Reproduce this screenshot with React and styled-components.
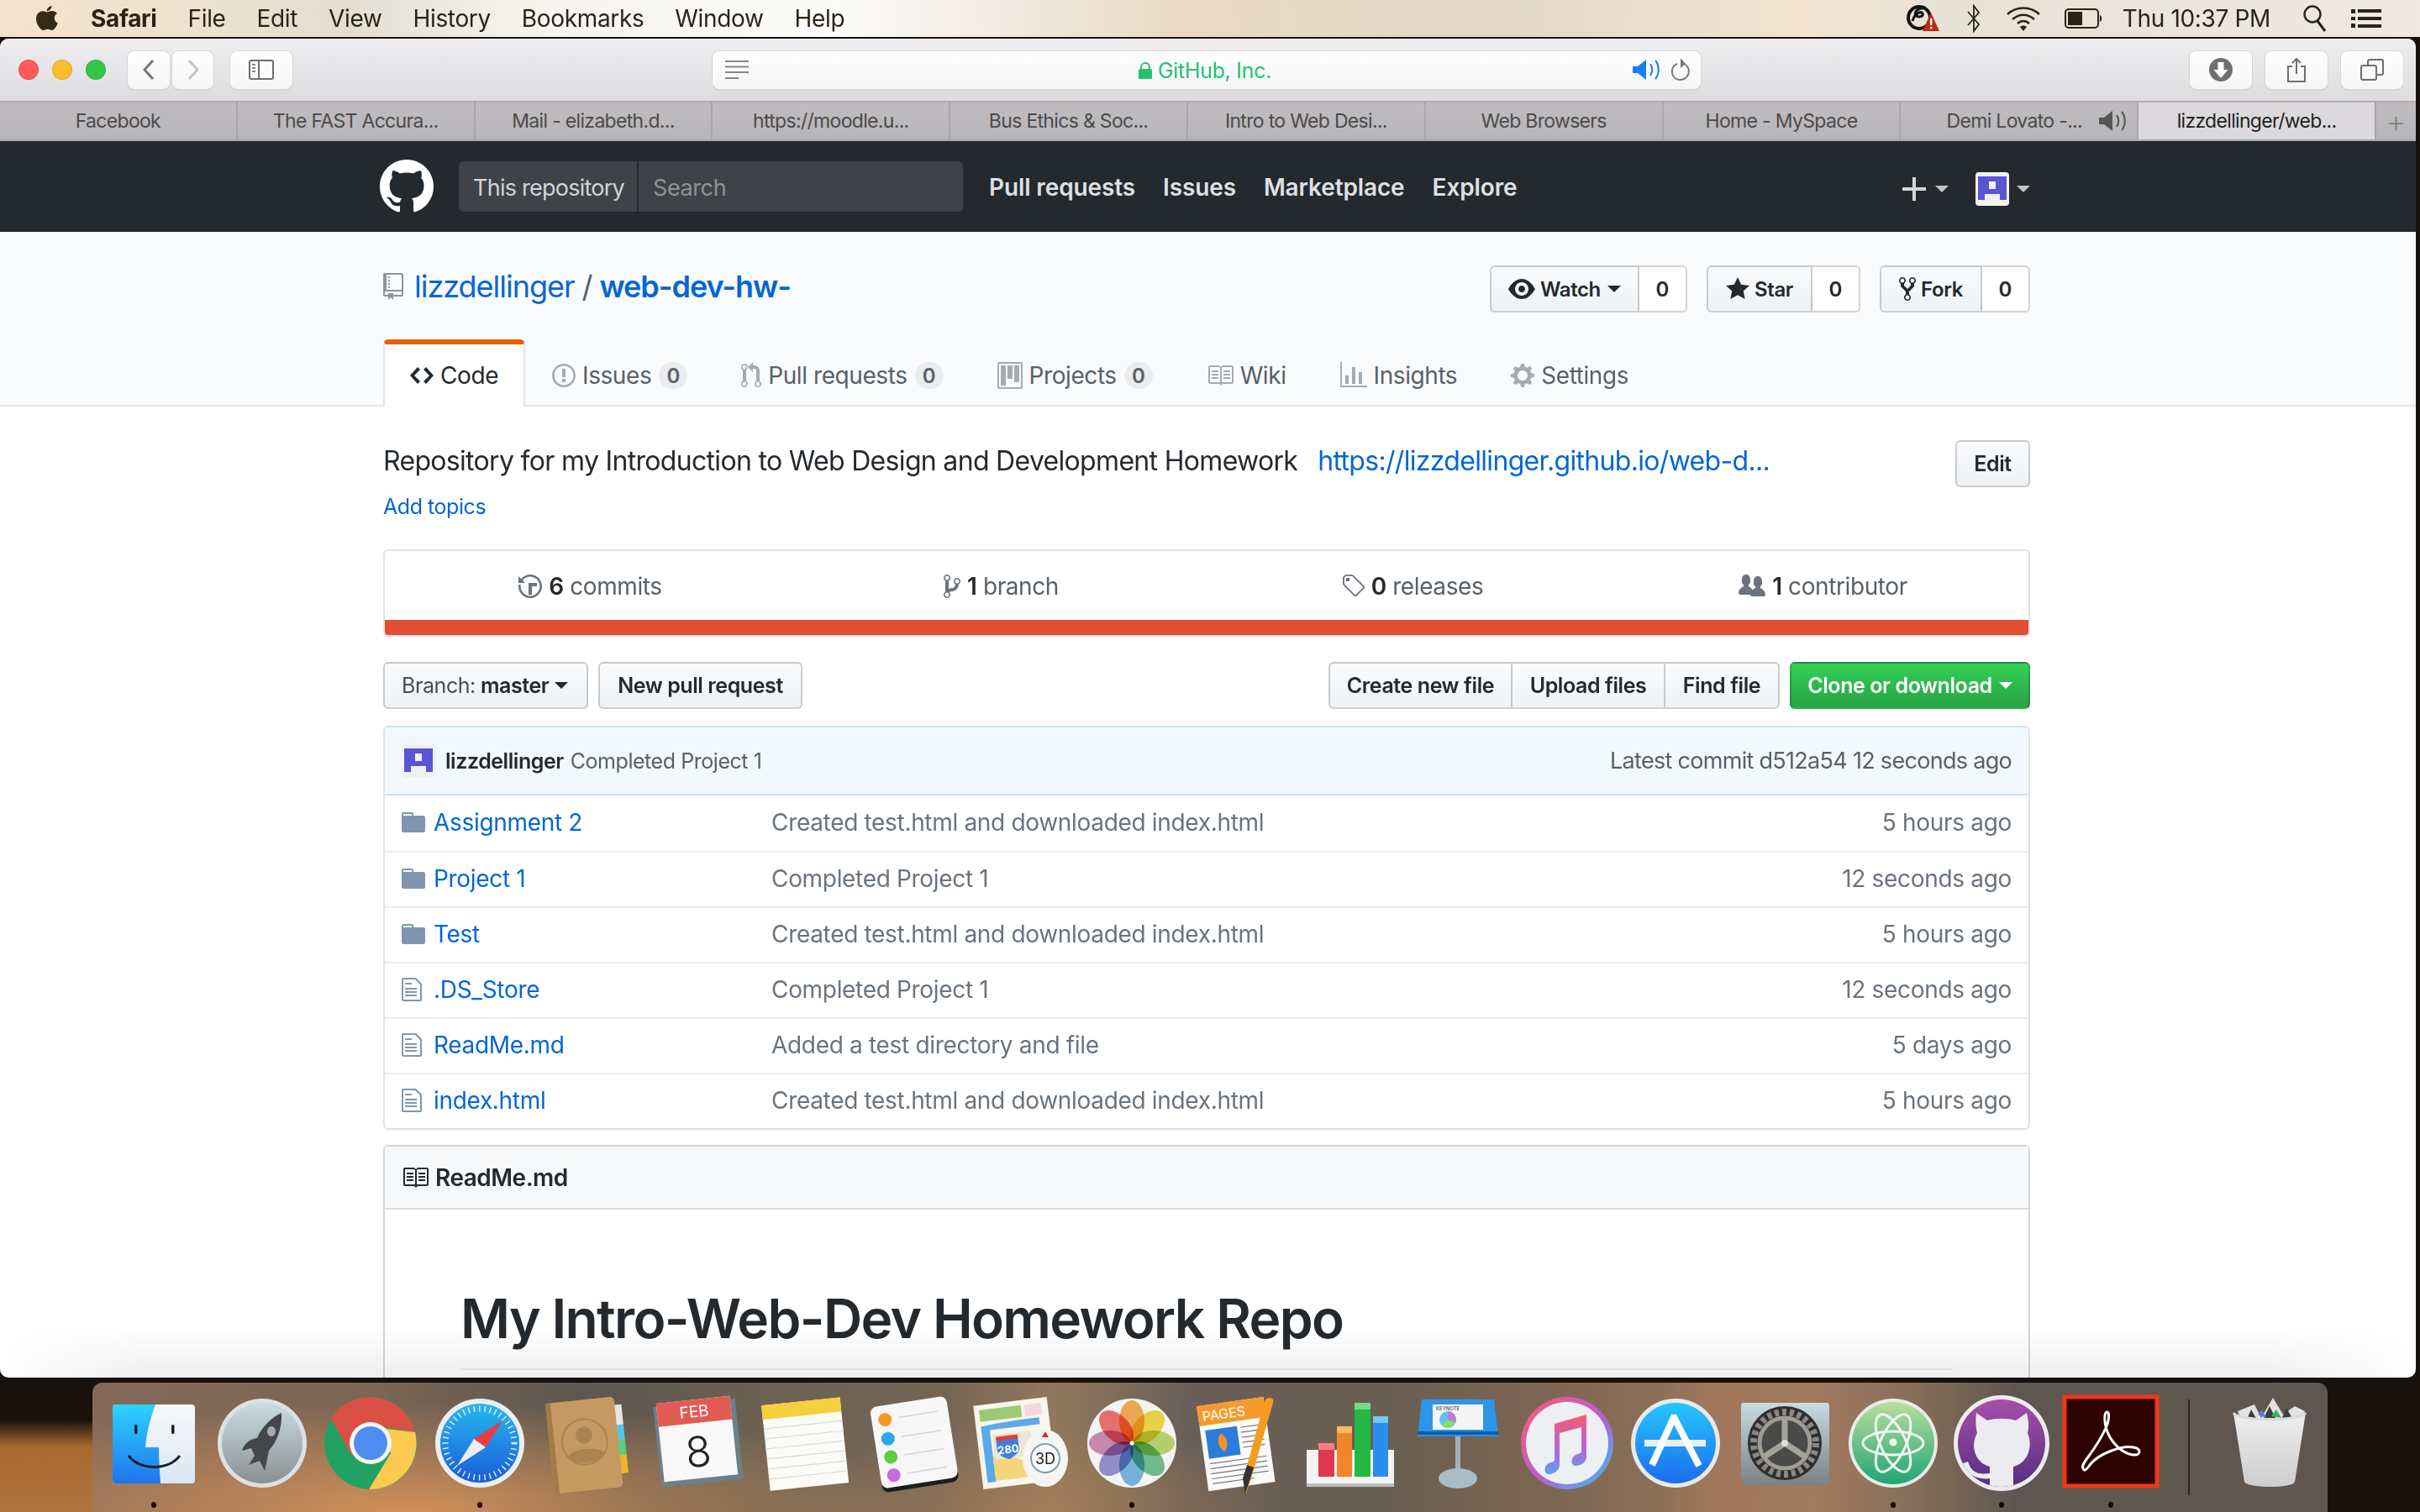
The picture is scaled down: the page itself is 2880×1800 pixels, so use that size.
import React from 'react'
import styled, { createGlobalStyle } from 'styled-components'

const sans = '"Inter", "Liberation Sans", sans-serif'

const Global = createGlobalStyle`
  html, body { margin: 0; padding: 0; }
  body { font-family: ${sans}; width: 2880px; height: 1800px; overflow: hidden; }
  * { box-sizing: border-box; }
`

/* ---------- octicons ---------- */
const oct = {
  mark: [16, 'M8 0C3.58 0 0 3.58 0 8c0 3.54 2.29 6.53 5.47 7.59.4.07.55-.17.55-.38 0-.19-.01-.82-.01-1.49-2.01.37-2.53-.49-2.69-.94-.09-.23-.48-.94-.82-1.13-.28-.15-.68-.52-.01-.53.63-.01 1.08.58 1.23.82.72 1.21 1.87.87 2.33.66.07-.52.28-.87.51-1.07-1.78-.2-3.64-.89-3.64-3.95 0-.87.31-1.59.82-2.15-.08-.2-.36-1.02.08-2.12 0 0 .67-.21 2.2.82.64-.18 1.32-.27 2-.27.68 0 1.36.09 2 .27 1.53-1.04 2.2-.82 2.2-.82.44 1.1.16 1.92.08 2.12.51.56.82 1.27.82 2.15 0 3.07-1.87 3.75-3.65 3.95.29.25.54.73.54 1.48 0 1.07-.01 1.93-.01 2.2 0 .21.15.46.55.38A8.013 8.013 0 0 0 16 8c0-4.42-3.58-8-8-8z'],
  repo: [12, 'M4 9H3V8h1v1zm0-3H3v1h1V6zm0-2H3v1h1V4zm0-2H3v1h1V2zm8-1v12c0 .55-.45 1-1 1H6v2l-1.5-1.5L3 16v-2H1c-.55 0-1-.45-1-1V1c0-.55.45-1 1-1h10c.55 0 1 .45 1 1zm-1 10H1v2h2v-1h3v1h5v-2zm0-10H2v9h9V1z'],
  code: [14, 'M9.5 3L8 4.5 11.5 8 8 11.5 9.5 13 14 8 9.5 3zm-5 0L0 8l4.5 5L6 11.5 2.5 8 6 4.5 4.5 3z'],
  issue: [14, 'M7 2.3c3.14 0 5.7 2.56 5.7 5.7s-2.56 5.7-5.7 5.7A5.71 5.71 0 0 1 1.3 8c0-3.14 2.56-5.7 5.7-5.7zM7 1C3.14 1 0 4.14 0 8s3.14 7 7 7 7-3.14 7-7-3.14-7-7-7zm1 3H6v5h2V4zm0 6H6v2h2v-2z'],
  pull: [12, 'M11 11.28V5c-.03-.78-.34-1.47-.94-2.06C9.46 2.35 8.78 2.03 8 2H7V0L4 3l3 3V4h1c.27.02.48.11.69.31.21.2.3.42.31.69v6.28A1.993 1.993 0 0 0 10 15a1.993 1.993 0 0 0 1-3.72zm-1 2.92c-.66 0-1.2-.55-1.2-1.2 0-.65.55-1.2 1.2-1.2.65 0 1.2.55 1.2 1.2 0 .65-.55 1.2-1.2 1.2zM4 3c0-1.11-.89-2-2-2a1.993 1.993 0 0 0-1 3.72v6.56A1.993 1.993 0 0 0 2 15a1.993 1.993 0 0 0 1-3.72V4.72c.59-.34 1-.98 1-1.72zm-.8 10c0 .66-.55 1.2-1.2 1.2-.65 0-1.2-.55-1.2-1.2 0-.65.55-1.2 1.2-1.2.65 0 1.2.55 1.2 1.2zM2 4.2C1.34 4.2.8 3.65.8 3c0-.65.55-1.2 1.2-1.2.65 0 1.2.55 1.2 1.2 0 .65-.55 1.2-1.2 1.2z'],
  project: [15, 'M10 12h3V2h-3v10zm-4-2h3V2H6v8zm-4 4h3V2H2v12zm-1 1h13V1H1v14zM14 0H1a1 1 0 0 0-1 1v14a1 1 0 0 0 1 1h13a1 1 0 0 0 1-1V1a1 1 0 0 0-1-1z'],
  book: [16, 'M3 5h4v1H3V5zm0 3h4V7H3v1zm0 2h4V9H3v1zm11-5h-4v1h4V5zm0 2h-4v1h4V7zm0 2h-4v1h4V9zm2-6v9c0 .55-.45 1-1 1H9.5l-1 1-1-1H2c-.55 0-1-.45-1-1V3c0-.55.45-1 1-1h5.5l1 1 1-1H15c.55 0 1 .45 1 1zm-8 .5L7.5 3H2v9h6V3.5zm7-.5H9.5l-.5.5V12h6V3z'],
  graph: [16, 'M16 14v1H0V0h1v14h15zM5 13H3V8h2v5zm4 0H7V3h2v10zm4 0h-2V6h2v7z'],
  gear: [14, 'M14 8.77v-1.6l-1.94-.64-.45-1.09.88-1.84-1.13-1.13-1.81.91-1.09-.45-.69-1.92h-1.6l-.63 1.94-1.11.45-1.84-.88-1.13 1.13.91 1.81-.45 1.09L0 7.23v1.59l1.94.64.45 1.09-.88 1.84 1.13 1.13 1.81-.91 1.09.45.69 1.92h1.59l.63-1.94 1.11-.45 1.84.88 1.13-1.13-.92-1.81.47-1.09L14 8.75v.02zM7 11c-1.66 0-3-1.34-3-3s1.34-3 3-3 3 1.34 3 3-1.34 3-3 3z'],
  eye: [16, 'M8.06 2C3 2 0 8 0 8s3 6 8.06 6C13 14 16 8 16 8s-3-6-7.94-6zM8 12c-2.2 0-4-1.78-4-4 0-2.2 1.8-4 4-4 2.22 0 4 1.8 4 4 0 2.22-1.78 4-4 4zm2-4c0 1.11-.89 2-2 2-1.11 0-2-.89-2-2 0-1.11.89-2 2-2 1.11 0 2 .89 2 2z'],
  star: [14, 'M14 6l-4.9-.64L7 1 4.9 5.36 0 6l3.6 3.26L2.67 14 7 11.67 11.33 14l-.93-4.74L14 6z'],
  fork: [10, 'M8 1a1.993 1.993 0 0 0-1 3.72V6L5 8 3 6V4.72A1.993 1.993 0 0 0 2 1a1.993 1.993 0 0 0-1 3.72V6.5l3 3v1.78A1.993 1.993 0 0 0 5 15a1.993 1.993 0 0 0 1-3.72V9.5l3-3V4.72A1.993 1.993 0 0 0 8 1zM2 4.2C1.34 4.2.8 3.65.8 3c0-.65.55-1.2 1.2-1.2.65 0 1.2.55 1.2 1.2 0 .65-.55 1.2-1.2 1.2zm3 10c-.66 0-1.2-.55-1.2-1.2 0-.65.55-1.2 1.2-1.2.65 0 1.2.55 1.2 1.2 0 .65-.55 1.2-1.2 1.2zm3-10c-.66 0-1.2-.55-1.2-1.2 0-.65.55-1.2 1.2-1.2.65 0 1.2.55 1.2 1.2 0 .65-.55 1.2-1.2 1.2z'],
  history: [14, 'M8 13H6V6h5v2H8v5zM7 1C4.81 1 2.87 2.02 1.59 3.59L0 2v4h4L2.5 4.5C3.55 3.17 5.17 2.3 7 2.3c3.14 0 5.7 2.56 5.7 5.7s-2.56 5.7-5.7 5.7A5.71 5.71 0 0 1 1.3 8c0-.34.03-.67.09-1H.08C.03 7.33 0 7.66 0 8c0 3.86 3.14 7 7 7s7-3.14 7-7-3.14-7-7-7z'],
  branch: [10, 'M10 5c0-1.11-.89-2-2-2a1.993 1.993 0 0 0-1 3.72v.3c-.02.52-.23.98-.63 1.38-.4.4-.86.61-1.38.63-.83.02-1.48.16-2 .45V4.72a1.993 1.993 0 0 0-1-3.72C.88 1 0 1.89 0 3a2 2 0 0 0 1 1.72v6.56c-.59.35-1 .99-1 1.72 0 1.11.89 2 2 2 1.11 0 2-.89 2-2 0-.53-.2-1-.53-1.36.09-.06.48-.41.59-.47.25-.11.56-.17.94-.17 1.05-.05 1.95-.45 2.75-1.25S8.95 7.77 9 6.73h-.02C9.59 6.37 10 5.73 10 5zM2 1.8c.66 0 1.2.55 1.2 1.2 0 .65-.55 1.2-1.2 1.2C1.35 4.2.8 3.65.8 3c0-.65.55-1.2 1.2-1.2zm0 12.41c-.66 0-1.2-.55-1.2-1.2 0-.65.55-1.2 1.2-1.2.65 0 1.2.55 1.2 1.2 0 .65-.55 1.2-1.2 1.2zm6-8c-.66 0-1.2-.55-1.2-1.2 0-.65.55-1.2 1.2-1.2.65 0 1.2.55 1.2 1.2 0 .65-.55 1.2-1.2 1.2z'],
  tag: [14, 'M7.73 1.73C7.26 1.26 6.62 1 5.96 1H3.5C2.13 1 1 2.13 1 3.5v2.47c0 .66.27 1.3.73 1.77l6.06 6.06c.39.39 1.02.39 1.41 0l4.59-4.59a.996.996 0 0 0 0-1.41L7.73 1.73zM2.38 7.09c-.31-.3-.47-.7-.47-1.13V3.5c0-.88.72-1.59 1.59-1.59h2.47c.42 0 .83.16 1.13.47l6.14 6.13-4.73 4.73-6.13-6.15zM3.01 3h2v2H3V3h.01z'],
  people: [16, 'M16 12.999c0 .439-.45 1-1 1H7.995c-.539 0-.994-.447-.995-.999H1c-.54 0-1-.561-1-1 0-2.634 3-4 3-4s.229-.409 0-1c-.841-.621-1.058-.59-1-3 .058-2.419 1.367-3 2.5-3s2.442.58 2.5 3c.058 2.41-.159 2.379-1 3-.229.59 0 1 0 1s1.549.711 2.42 2.088C9.196 9.369 10 8.999 10 8.999s.229-.409 0-1c-.841-.62-1.058-.59-1-3 .058-2.419 1.367-3 2.5-3s2.437.581 2.495 3c.059 2.41-.158 2.38-1 3-.229.59 0 1 0 1s3.005 1.366 3.005 4z'],
  dir: [14, 'M13 4H7V3c0-.66-.31-1-1-1H1c-.55 0-1 .45-1 1v10c0 .55.45 1 1 1h12c.55 0 1-.45 1-1V5c0-.55-.45-1-1-1zM6 4H1V3h5v1z'],
  file: [12, 'M6 5H2V4h4v1zM2 8h7V7H2v1zm0 2h7V9H2v1zm0 2h7v-1H2v1zm10-7.5V14c0 .55-.45 1-1 1H1c-.55 0-1-.45-1-1V2c0-.55.45-1 1-1h7.5L12 4.5zM11 5L8 2H1v12h10V5z'],
}

const OctSvg = styled.svg`
  display: block;
  flex: none;
  fill: currentColor;
  fill-rule: evenodd;
  color: ${p => p.$color || 'inherit'};
`

const Oct = ({ name, h = 32, color }) => (
  <OctSvg $color={color} viewBox={`0 0 ${oct[name][0]} 16`} width={(h * oct[name][0]) / 16} height={h}>
    <path d={oct[name][1]} />
  </OctSvg>
)

const Svg = styled.svg`
  display: block;
  flex: none;
`

const Identicon = () => (
  <Svg width="40" height="40" viewBox="0 0 40 40">
    <rect width="40" height="40" rx="4" fill="#f0f0f0" />
    <path d="M3 5h34v28h-8v-7H11v7H3z" fill="#5a55d6" />
    <rect x="16" y="11" width="8" height="9" fill="#f0f0f0" />
  </Svg>
)

/* ---------- desktop ---------- */
const Desktop = styled.div`
  width: 2880px;
  height: 1800px;
  display: flex;
  flex-direction: column;
  background:
    linear-gradient(180deg, #19110a 0, #19110a 1690px, #a8692f 1722px, #b0753d 1800px) left top / 110px 100% no-repeat,
    #18110c;
`

const MenuBar = styled.div`
  height: 44px;
  flex: none;
  display: flex;
  align-items: center;
  padding: 0 46px 0 42px;
  color: #2c2317;
  font-size: 28px;
  letter-spacing: -0.35px;
  background: linear-gradient(90deg, #f3e2cd 0, #eee1cf 230px, #e2ded1 420px, #f4f3ee 620px, #fbfbfa 1000px, #f2ece2 1180px, #e9d9c6 1400px, #e3d8c9 1800px, #f3e4d3 2150px, #e7e2d6 2330px, #efe9df 2880px);
`

const MenuItems = styled.div`
  display: flex;
  align-items: center;
  gap: 37px;
  margin-left: 38px;
`

const MenuItem = styled.span`
  font-weight: ${p => (p.$bold ? 700 : 400)};
`

const MenuRight = styled.div`
  margin-left: auto;
  display: flex;
  align-items: center;
  gap: 28px;
`

const Clock = styled.span`
  margin: 0 10px 0 -5px;
`

const Window = styled.div`
  position: relative;
  margin-top: 2px;
  width: 2875px;
  height: 1594px;
  flex: none;
  overflow: hidden;
  border-radius: 10px;
  background: #fff;
  display: flex;
  flex-direction: column;
`

const BottomShade = styled.div`
  position: absolute;
  left: 0;
  right: 0;
  bottom: 0;
  height: 60px;
  background: linear-gradient(180deg, rgba(0, 0, 0, 0), rgba(0, 0, 0, 0.065));
  mask-image: linear-gradient(90deg, transparent 0, #000 170px, #000 2700px, transparent 100%);
`

const Toolbar = styled.div`
  height: 74px;
  flex: none;
  display: flex;
  align-items: center;
  padding: 0 15px 0 22px;
  background: linear-gradient(180deg, #eeedef, #dedcdf);
`

const Light = styled.span`
  width: 24px;
  height: 24px;
  border-radius: 50%;
  margin-right: 16px;
  background: ${p => p.$c};
  box-shadow: inset 0 0 0 1px rgba(0, 0, 0, 0.1);
`

const ChromeButton = styled.div`
  width: ${p => p.$w}px;
  height: 45px;
  margin-left: ${p => p.$ml || 0}px;
  flex: none;
  display: flex;
  align-items: center;
  justify-content: center;
  border-radius: 8px;
  background: linear-gradient(180deg, #ffffff, #f5f5f5);
  box-shadow: 0 0 0 1px #d6d4d6, 0 1px 1px #b5b3b5;
`

const AddressBar = styled(ChromeButton)`
  width: 1176px;
  margin-left: 500px;
  justify-content: space-between;
  padding: 0 12px 0 15px;
`

const Address = styled.div`
  display: flex;
  align-items: center;
  gap: 7px;
  margin: 2px 0 0 34px;
  color: #25c16f;
  font-size: 25px;
  letter-spacing: -0.3px;
`

const AddressRight = styled.div`
  display: flex;
  align-items: center;
  gap: 10px;
`

const ToolRight = styled.div`
  margin-left: auto;
  display: flex;
  gap: 16px;
`

const TabStrip = styled.div`
  height: 48px;
  flex: none;
  display: flex;
  border-top: 2px solid #afadaf;
  border-bottom: 2px solid #a9a7a9;
  background: linear-gradient(180deg, #bfbdbf, #b7b5b7);
`

const BrowserTab = styled.div`
  flex: 0 0 282.8px;
  display: flex;
  align-items: center;
  justify-content: center;
  gap: 20px;
  padding-left: ${p => (p.$sound ? 44 : 0)}px;
  font-size: 23px;
  letter-spacing: -0.68px;
  color: ${p => (p.$active ? '#1f1f1f' : '#4d4a4d')};
  background: ${p => (p.$active ? '#dbd9db' : 'transparent')};
  border-right: 2px solid #a8a6a8;
`

const NewTab = styled.div`
  flex: 1;
  display: flex;
  align-items: center;
  justify-content: center;
  color: #777577;
  font-size: 38px;
  font-weight: 200;
`

/* ---------- github header ---------- */
const GhHeader = styled.div`
  height: 108px;
  flex: none;
  background: #24292e;
  display: flex;
  align-items: center;
  padding: 0 0 0 452px;
  color: #fff;
`

const Search = styled.div`
  width: 600px;
  height: 60px;
  margin-left: 30px;
  border-radius: 6px;
  background: #3f4348;
  display: flex;
  align-items: center;
  font-size: 27px;
`

const Scope = styled.div`
  width: 214px;
  height: 100%;
  display: flex;
  align-items: center;
  padding: 2px 0 0 17px;
  color: #d2d4d6;
  letter-spacing: -0.75px;
  border-right: 2px solid #24292e;
`

const Placeholder = styled.div`
  padding: 2px 0 0 17px;
  color: #8f9396;
  letter-spacing: -0.4px;
`

const GhNav = styled.div`
  display: flex;
  margin: 2px 0 0 31px;
  gap: 33px;
  font-size: 28px;
  font-weight: 600;
  letter-spacing: -0.12px;
  color: #dfe0e2;
`

const GhRight = styled.div`
  margin: 6px 459px 0 auto;
  display: flex;
  align-items: center;
`

const Spacer = styled.span`
  width: 32px;
`

const Caret = styled.span`
  display: inline-block;
  flex: none;
  width: 0;
  height: 0;
  margin-left: ${p => p.$ml || 8}px;
  border-style: solid;
  border-width: 8px 8px 0;
  border-color: ${p => p.$c || 'currentColor'} transparent transparent;
`

/* ---------- repo head ---------- */
const Page = styled.div`
  flex: none;
`

const RepoHead = styled.div`
  height: 208px;
  padding-top: 40px;
  background: #fafbfc;
  border-bottom: 2px solid #e1e4e8;
`

const Container = styled.div`
  width: 1960px;
  margin-left: 456px;
`

const TitleRow = styled.div`
  height: 56px;
  display: flex;
  align-items: center;
  justify-content: space-between;
`

const RepoTitle = styled.div`
  display: flex;
  align-items: center;
  font-size: 36px;
  letter-spacing: -1.02px;
  color: #586069;
  margin-top: -6px;
`

const Link = styled.a`
  color: #0366d6;
  font-weight: ${p => (p.$bold ? 600 : 400)};
`

const Owner = styled(Link)`
  margin-left: 13px;
`

const Slash = styled.span`
  margin: 0 9px;
`

const Actions = styled.div`
  display: flex;
  gap: 23px;
`

const Social = styled.div`
  display: flex;
`

const Btn = styled.div`
  height: 56px;
  display: flex;
  align-items: center;
  justify-content: center;
  flex: none;
  width: ${p => (p.$w ? `${p.$w}px` : 'auto')};
  padding: ${p => (p.$w ? 0 : '0 22px')};
  gap: 6px;
  border: 2px solid rgba(27, 31, 35, 0.2);
  border-radius: ${p => p.$radius || '6px'};
  margin-left: ${p => p.$ml || 0}px;
  background: linear-gradient(180deg, #fafbfc, #eff3f6 90%);
  color: #24292e;
  font-size: ${p => p.$fs || 25}px;
  font-weight: 600;
  letter-spacing: -0.42px;
  white-space: nowrap;
`

const BranchBtn = styled(Btn)`
  justify-content: flex-start;
  padding-left: 20px;
`

const Count = styled.div`
  width: ${p => p.$w}px;
  height: 56px;
  display: flex;
  align-items: center;
  justify-content: center;
  font-size: 24px;
  font-weight: 600;
  color: #24292e;
  background: #fff;
  border: 2px solid rgba(27, 31, 35, 0.2);
  border-left: 0;
  border-radius: 0 6px 6px 0;
`

const Tabs = styled.div`
  display: flex;
  height: 80px;
  margin-top: 32px;
`

const RepoTab = styled.div`
  height: 80px;
  display: flex;
  align-items: center;
  padding: 6px ${p => (p.$sel ? '30px' : '32px')} 0;
  font-size: 28px;
  letter-spacing: -0.42px;
  color: ${p => (p.$sel ? '#24292e' : '#586069')};
  background: ${p => (p.$sel ? '#fff' : 'transparent')};
  border-radius: 6px 6px 0 0;
  ${p => p.$sel && `
    border-top: 6px solid #e36209;
    border-left: 2px solid #e1e4e8;
    border-right: 2px solid #e1e4e8;
    padding-top: 0;
  `}
`

const TabLabel = styled.span`
  margin-left: 8px;
`

const Counter = styled.span`
  margin-left: 9px;
  width: 34px;
  height: 32px;
  border-radius: 16px;
  background: #ebeced;
  display: flex;
  align-items: center;
  justify-content: center;
  font-size: 24px;
  font-weight: 600;
  color: #586069;
`

/* ---------- page body ---------- */
const DescRow = styled.div`
  margin-top: 40px;
  height: 56px;
  display: flex;
  justify-content: space-between;
`

const Desc = styled.div`
  font-size: 32px;
  line-height: 50px;
  letter-spacing: -0.68px;
  color: #24292e;
  display: flex;
  gap: 24px;
`

const Topics = styled.div`
  margin-top: 5px;
  height: 36px;
  line-height: 36px;
  font-size: 25px;
  letter-spacing: -0.45px;
`

const Summary = styled.div`
  margin-top: 33px;
  border: 2px solid #dfe2e5;
  border-radius: 6px;
  overflow: hidden;
`

const Numbers = styled.div`
  height: 82px;
  display: flex;
`

const NumCell = styled.div`
  flex: 1;
  display: flex;
  align-items: center;
  justify-content: center;
  gap: 8px;
  font-size: 28px;
  letter-spacing: -0.4px;
  color: #586069;
  padding-top: 1px;

  b {
    color: #24292e;
    font-weight: 600;
  }
`

const LangBar = styled.div`
  height: 18px;
  background: #e24e32;
`

const FileNav = styled.div`
  margin-top: 30px;
  display: flex;
  justify-content: space-between;
`

const BtnGroup = styled.div`
  display: flex;
  align-items: center;
`

const BranchLabel = styled.span`
  font-weight: 400;
  color: #444d56;
`

const CloneBtn = styled(Btn)`
  background: linear-gradient(180deg, #34d058, #28a745 90%);
  color: #fff;
  margin-left: 12px;
  width: 286px;
  padding: 0;
`

const FileTable = styled.div`
  margin-top: 20px;
  border: 2px solid #dfe2e5;
  border-top: 0;
  border-radius: 6px;
  overflow: hidden;
`

const Tease = styled.div`
  height: 83px;
  display: flex;
  align-items: center;
  padding: 0 20px 0 20px;
  margin: 0 -2px;
  background: #f1f8ff;
  border: 2px solid #c8e1ff;
  border-radius: 6px 6px 0 0;
  font-size: 25px;
  letter-spacing: -0.45px;
  color: #586069;
`

const TeaseAuthor = styled.span`
  margin-left: 12px;
  color: #24292e;
  font-weight: 600;
`

const TeaseMsg = styled.span`
  margin-left: 8px;
`

const TeaseRight = styled.span`
  margin-left: auto;
  font-size: 27px;
  letter-spacing: -0.7px;
  color: #586069;
`

const FileRow = styled.div`
  height: 66px;
  display: flex;
  align-items: center;
  font-size: 28px;
  letter-spacing: -0.32px;
  padding: 0 20px 2px 20px;
  border-top: ${p => (p.$first ? 0 : '2px solid #eaecef')};
`

const FileIcon = styled.span`
  width: 38px;
  flex: none;
`

const FileName = styled.a`
  width: 402px;
  flex: none;
  color: #0366d6;
`

const FileMsg = styled.span`
  color: #6a737d;
`

const FileAge = styled.span`
  margin-left: auto;
  color: #6a737d;
`

const Readme = styled.div`
  margin-top: 18px;
  border: 2px solid #d1d5da;
  border-radius: 6px 6px 0 0;
  height: 400px;
`

const ReadmeHead = styled.div`
  height: 75px;
  display: flex;
  align-items: center;
  gap: 8px;
  padding-left: 20px;
  background: #f6f8fa;
  border-bottom: 2px solid #d8dbde;
  color: #24292e;
  font-size: 28px;
  font-weight: 600;
  letter-spacing: -0.5px;
`

const ReadmeBody = styled.div`
  padding: 90px 90px 0;
`

const H1 = styled.div`
  font-size: 64px;
  line-height: 80px;
  font-weight: 600;
  letter-spacing: -1.63px;
  color: #24292e;
  padding-bottom: 19px;
  border-bottom: 2px solid #eaecef;
`

/* ---------- dock ---------- */
const Dock = styled.div`
  margin: 6px 0 0 110px;
  width: 2660px;
  height: 154px;
  flex: none;
  display: flex;
  padding-left: 8px;
  border-radius: 12px 12px 0 0;
  background:
    radial-gradient(ellipse 620px 130px at 14% 100%, rgba(214, 146, 88, 0.95), rgba(214, 146, 88, 0) 100%),
    radial-gradient(ellipse 300px 110px at 42% 100%, rgba(170, 128, 88, 0.7), rgba(170, 128, 88, 0) 100%),
    linear-gradient(90deg, #84695a 0, #7c6655 12%, #5d574f 22%, #6c6152 30%, #746456 38%, #92785c 43%, #6a5f58 49%, #6a5f52 58%, #7c6553 65%, #8c6f57 70%, #a0765a 72%, #a27a5e 77%, #8a705a 81%, #5f574f 86%, #5e564f 100%);
`

const DockCell = styled.div`
  width: 129.4px;
  flex: none;
  display: flex;
  flex-direction: column;
  align-items: center;
  padding-top: 14px;
`

const DockSvg = styled.svg`
  display: block;
  overflow: visible;
`

const Petal = styled.ellipse`
  mix-blend-mode: multiply;
`

const DockDot = styled.span`
  width: 6px;
  height: 7px;
  margin-top: 8px;
  border-radius: 50%;
  background: ${p => (p.$on ? '#120a08' : 'transparent')};
`

const DockDivider = styled.div`
  width: 2px;
  height: 114px;
  margin: 20px 30px 0 28px;
  background: #2e2824;
`

/* ---------- small chrome drawings ---------- */
const AppleIcon = () => (
  <Svg width="28" height="32" viewBox="0 0 28 32">
    <path fill="#35291a" d="M19.5 1c.2 2.6-2.2 6-5.6 6.1C13.600 4.400 16.300 1.400 19.500 1zM14.200 8.300c1.300 0 3-1.300 5.500-1.300 1 0 4.200.1 6.200 3-4.700 3-3.900 9.400.9 11.400-1.100 2.900-4.100 8.600-7.300 8.600-1.700 0-2.700-1.200-4.800-1.200-2.200 0-3.300 1.200-4.900 1.200C6 30 1 22.500 1 16.500 1 10.700 4.800 7.200 8.600 7.200c2.400 0 4.300 1.100 5.600 1.100z" />
  </Svg>
)

const CloudAlert = () => (
  <Svg width="44" height="32" viewBox="0 0 44 32">
    <circle cx="17" cy="15" r="13" fill="none" stroke="#111" strokeWidth="4" />
    <path d="M9 19c3-10 10-12 12-9s-5 6-8 2 4-9 9-8" fill="none" stroke="#111" strokeWidth="3" />
    <path d="M31 9l10 22H21z" fill="#c02a10" />
    <rect x="30" y="16" width="2.400" height="8" fill="#fff" />
    <rect x="30" y="26" width="2.400" height="2.400" fill="#fff" />
  </Svg>
)

const BluetoothIcon = () => (
  <Svg width="20" height="34" viewBox="0 0 20 34">
    <path d="M3 9l13 15-6 8V2l6 8L3 25" fill="none" stroke="#2c2317" strokeWidth="1.800" />
  </Svg>
)

const WifiIcon = () => (
  <Svg width="42" height="30" viewBox="0 0 42 30">
    <g fill="none" stroke="#2c2317" strokeWidth="2.500">
      <path d="M2 10c11-10 27-10 38 0" />
      <path d="M8 16c8-7 18-7 26 0" />
      <path d="M14 21c4-4 10-4 14 0" />
    </g>
    <path d="M21 30l-4-5c2-2 6-2 8 0z" fill="#2c2317" />
  </Svg>
)

const BatteryIcon = () => (
  <Svg width="46" height="24" viewBox="0 0 46 24">
    <rect x="1" y="1" width="39" height="22" rx="4" fill="none" stroke="#2c2317" strokeWidth="2" />
    <rect x="4" y="4" width="17" height="16" fill="#2c2317" />
    <path d="M42 8c3 1 3 7 0 8z" fill="#2c2317" />
  </Svg>
)

const MagnifierIcon = () => (
  <Svg width="30" height="34" viewBox="0 0 30 34">
    <circle cx="12" cy="12" r="9.500" fill="none" stroke="#2c2317" strokeWidth="2.400" />
    <path d="M18 20l9 12" stroke="#2c2317" strokeWidth="3" />
  </Svg>
)

const ListIcon = () => (
  <Svg width="36" height="22" viewBox="0 0 36 22">
    <g fill="#2c2317">
      <rect x="0" y="0" width="5" height="5" />
      <rect x="8" y="0" width="28" height="4" />
      <rect x="0" y="9" width="5" height="4" />
      <rect x="8" y="9" width="28" height="4" />
      <rect x="0" y="17" width="5" height="5" />
      <rect x="8" y="18" width="28" height="4" />
    </g>
  </Svg>
)

const Chevron = ({ d, color }) => (
  <Svg width="16" height="26" viewBox="0 0 16 26">
    <path d={d} fill="none" stroke={color} strokeWidth="3" />
  </Svg>
)

const SidebarIcon = () => (
  <Svg width="30" height="24" viewBox="0 0 30 24">
    <rect x="1" y="1" width="28" height="22" rx="2" fill="none" stroke="#6f6f6f" strokeWidth="2" />
    <rect x="11" y="1" width="2" height="22" fill="#6f6f6f" />
    <rect x="4" y="5" width="4" height="2" fill="#8a8a8a" />
    <rect x="4" y="9" width="4" height="2" fill="#8a8a8a" />
    <rect x="4" y="13" width="4" height="2" fill="#8a8a8a" />
  </Svg>
)

const ReaderIcon = () => (
  <Svg width="28" height="22" viewBox="0 0 28 22">
    <g fill="#858585">
      <rect width="28" height="2" />
      <rect y="6.500" width="28" height="2" />
      <rect y="13" width="28" height="2" />
      <rect y="20" width="16" height="2" />
    </g>
  </Svg>
)

const LockIcon = () => (
  <Svg width="16" height="20" viewBox="0 0 16 20">
    <path d="M3 9V6a5 5 0 0 1 10 0v3" fill="none" stroke="#25c16f" strokeWidth="2" />
    <rect y="8" width="16" height="12" rx="1.500" fill="#25c16f" />
  </Svg>
)

const Speaker = ({ color }) => (
  <Svg width="35" height="26" viewBox="0 0 35 26">
    <path d="M0 9h6l10-8v24L6 17H0z" fill={color} />
    <path d="M21 6c3 4 3 10 0 14" fill="none" stroke={color} strokeWidth="2" />
    <path d="M27 2c5 6 5 16 0 22" fill="none" stroke={color} strokeWidth="2" />
  </Svg>
)

const ReloadIcon = () => (
  <Svg width="24" height="30" viewBox="0 0 24 30">
    <path d="M17 8.500a10 10 0 1 1-9-.7" fill="none" stroke="#777" strokeWidth="2" />
    <path d="M12 1l6 7-6 5z" fill="#777" />
  </Svg>
)

const DownloadIcon = () => (
  <Svg width="30" height="30" viewBox="0 0 30 30">
    <circle cx="15" cy="15" r="14" fill="#6f6f6f" />
    <path d="M11.500 6h7v9h5L15 25 6.500 15h5z" fill="#fff" />
  </Svg>
)

const ShareIcon = () => (
  <Svg width="24" height="30" viewBox="0 0 24 30">
    <path d="M7 11H2v18h20V11h-5M12 20V2M7 7l5-5 5 5" fill="none" stroke="#6f6f6f" strokeWidth="2" />
  </Svg>
)

const TabsIcon = () => (
  <Svg width="28" height="26" viewBox="0 0 28 26">
    <rect x="1" y="8" width="18" height="17" rx="2" fill="none" stroke="#6f6f6f" strokeWidth="2" />
    <path d="M9 8V3a2 2 0 0 1 2-2h14a2 2 0 0 1 2 2v14a2 2 0 0 1-2 2h-6" fill="none" stroke="#6f6f6f" strokeWidth="2" />
  </Svg>
)

/* ---------- dock icons, all on one 120 box ---------- */
const Finder = () => (
  <>
    <defs>
      <linearGradient id="fb" x1="0" y1="0" x2="0" y2="1"><stop offset="0" stopColor="#2ed3ff" /><stop offset="1" stopColor="#1f74ec" /></linearGradient>
      <linearGradient id="fw" x1="0" y1="0" x2="0" y2="1"><stop offset="0" stopColor="#f8f9fb" /><stop offset="1" stopColor="#d9e6f3" /></linearGradient>
    </defs>
    <rect x="11" y="12" width="98" height="94" rx="4" fill="url(#fw)" />
    <path d="M15 12h47C56 28 51 48 50 63h16c0 15 1 29 2 43H15a4 4 0 0 1-4-4V16a4 4 0 0 1 4-4z" fill="url(#fb)" />
    <rect x="37" y="36" width="3.500" height="11" rx="1.500" fill="#16212e" />
    <rect x="81" y="36" width="3.500" height="11" rx="1.500" fill="#16212e" />
    <path d="M30 73c14 18 47 18 61 0" fill="none" stroke="#16212e" strokeWidth="3" />
  </>
)

const Launchpad = () => (
  <>
    <defs>
      <linearGradient id="lp" x1="0" y1="0" x2="0" y2="1"><stop offset="0" stopColor="#c9dde2" /><stop offset="1" stopColor="#8b9092" /></linearGradient>
    </defs>
    <circle cx="60" cy="58" r="53" fill="#dce2e4" />
    <circle cx="60" cy="58" r="48" fill="url(#lp)" />
    <path d="M83 22c-13 6-24 18-29 30-8 1-15 6-18 15l11-3 4 9-7 11 13-5 6 12 5-24c10-11 16-28 15-45z" fill="#43474a" />
    <ellipse cx="71" cy="44" rx="5" ry="6" fill="#a6acae" />
  </>
)

const Chrome = () => (
  <>
    <circle cx="60" cy="58" r="55" fill="#21a262" />
    <path d="M13 29A55 55 0 0 1 113 45L60 36 37 72z" fill="#db4f45" />
    <path d="M113 45A55 55 0 0 1 58 113L84 70 70 40z" fill="#fdc94e" />
    <circle cx="60" cy="58" r="25" fill="#f6f6f6" />
    <circle cx="60" cy="58" r="20" fill="#4f8cf0" />
  </>
)

const Safari = () => (
  <>
    <defs>
      <linearGradient id="sf" x1="0" y1="0" x2="0" y2="1"><stop offset="0" stopColor="#27b8ef" /><stop offset="1" stopColor="#1a5cd8" /></linearGradient>
    </defs>
    <circle cx="60" cy="58" r="53" fill="#eceff1" />
    <circle cx="60" cy="58" r="47" fill="url(#sf)" />
    <circle cx="60" cy="58" r="41" fill="none" stroke="#e9f3fb" strokeWidth="7" strokeDasharray="1.400 5" />
    <path d="M87 31L53 53l14 10z" fill="#ee3c3c" />
    <path d="M33 85l20-32 14 10z" fill="#eceef0" />
  </>
)

const Contacts = () => (
  <g transform="rotate(-6 60 58)">
    <rect x="90" y="16" width="14" height="26" fill="#e6e6e6" />
    <rect x="90" y="40" width="14" height="20" fill="#58c4e8" />
    <rect x="90" y="58" width="14" height="20" fill="#5fce7c" />
    <rect x="90" y="76" width="14" height="22" fill="#f0b22e" />
    <rect x="14" y="6" width="82" height="108" rx="5" fill="#c49a62" />
    <rect x="14" y="6" width="6" height="108" fill="#a47b45" />
    <circle cx="56" cy="56" r="27" fill="none" stroke="#ab8350" strokeWidth="2" />
    <circle cx="56" cy="48" r="10" fill="#aa8350" />
    <path d="M34 72c6-10 38-10 44 0-10 12-34 12-44 0z" fill="#aa8350" />
  </g>
)

const Calendar = () => (
  <g transform="rotate(-6 60 58)">
    <rect x="12" y="10" width="98" height="96" fill="#6d7f88" />
    <rect x="16" y="6" width="88" height="94" fill="#f8f8f8" />
    <rect x="16" y="6" width="88" height="28" fill="#e35a55" />
    <text x="60" y="27" textAnchor="middle" fontFamily={sans} fontSize="19" fill="#fff">FEB</text>
    <text x="60" y="86" textAnchor="middle" fontFamily={sans} fontSize="50" fontWeight="300" fill="#222">8</text>
  </g>
)

const Notes = () => (
  <g transform="rotate(-6 60 58)">
    <rect x="12" y="8" width="94" height="102" fill="#fbfbf8" />
    <rect x="12" y="8" width="94" height="17" fill="#f6cf3c" />
    <g stroke="#d8d8d4" strokeWidth="1.200">
      <path d="M12 36h94M12 48h94M12 60h94M12 72h94M12 84h94M12 96h94" />
    </g>
  </g>
)

const Reminders = () => (
  <g transform="rotate(-9 60 58)">
    <rect x="14" y="10" width="92" height="98" rx="8" fill="#1d1d1d" transform="translate(0 3)" />
    <rect x="14" y="8" width="92" height="98" rx="8" fill="#f7f7f7" />
    <circle cx="30" cy="25" r="8" fill="#f19a28" />
    <circle cx="30" cy="48" r="8" fill="#2ba8ee" />
    <circle cx="30" cy="70" r="8" fill="#5bce3e" />
    <circle cx="30" cy="92" r="8" fill="#c56de0" />
    <path d="M46 25h48M46 48h48M46 70h48M46 92h48" stroke="#d5d5d5" strokeWidth="1.500" />
  </g>
)

const Maps = () => (
  <>
    <g transform="rotate(-7 50 58)">
      <rect x="6" y="8" width="88" height="100" fill="#f7f5ee" />
      <rect x="12" y="14" width="50" height="14" fill="#9acb70" />
      <rect x="66" y="14" width="20" height="14" fill="#f6d7dc" />
      <path d="M12 34c20-3 50-3 70-3v8H22v62H12z" fill="#5aaae8" />
      <path d="M22 70c20 0 36 4 50 30H22z" fill="#f3d77d" />
      <path d="M24 45h46v30H24z" fill="#ece6d2" />
      <path d="M28 50h26v14c0 6-8 10-13 12-5-2-13-6-13-12z" fill="#3f7fd8" />
      <rect x="28" y="48" width="26" height="5" fill="#d9403a" />
      <text x="41" y="69" textAnchor="middle" fontFamily={sans} fontSize="13" fontWeight="700" fill="#fff">280</text>
    </g>
    <ellipse cx="86" cy="76" rx="27" ry="34" fill="#f5f5f3" />
    <circle cx="86" cy="76" r="17" fill="#fbfbfb" stroke="#7ea3ae" strokeWidth="2" />
    <text x="86" y="83" textAnchor="middle" fontFamily={sans} fontSize="18" fill="#222">3D</text>
    <path d="M86 44l4 7h-8z" fill="#e0281c" />
  </>
)

const petals = ['#f6a544', '#f4d936', '#b6d364', '#66bb88', '#6eb2df', '#8d8acb', '#cb82b0', '#ef6661']

const Photos = () => (
  <>
    <circle cx="60" cy="58" r="53" fill="#f3f3f3" />
    {petals.map((c, i) => (
      <Petal key={c} cx="60" cy="32" rx="15" ry="25" fill={c} opacity="0.9" transform={`rotate(${i * 45} 60 58)`} />
    ))}
    <circle cx="60" cy="58" r="2.500" fill="#fff" />
  </>
)

const Pages = () => (
  <>
    <g transform="rotate(-8 55 60)">
      <rect x="14" y="8" width="80" height="102" fill="#fafafa" />
      <rect x="14" y="8" width="80" height="24" fill="#f79a2c" />
      <text x="19" y="27" fontFamily={sans} fontSize="16" fill="#fff">PAGES</text>
      <rect x="20" y="38" width="38" height="34" fill="#2c7cdc" />
      <path d="M38 44c7 4 8 16 1 22-7-6-7-18-1-22z" fill="#f39224" />
      <path d="M62 40h26M62 46h26M62 52h26M62 58h26M62 64h26M20 78h68M20 84h68M20 90h68M20 96h68M20 102h50" stroke="#777" strokeWidth="1.200" />
    </g>
    <path d="M94 4c4 0 5 3 4 6L72 100l-6 18-3-18L88 8c1-2 3-4 6-4z" fill="#f59c1f" />
    <path d="M67 84l8 3-4 13-6 18-3-18z" fill="#333" />
  </>
)

const NumbersApp = () => (
  <>
    <rect x="9" y="66" width="104" height="44" fill="#f4f4f4" />
    <rect x="9" y="106" width="104" height="4" fill="#bcbcbc" />
    <rect x="23" y="58" width="19" height="40" rx="1" fill="#df3850" />
    <rect x="23" y="58" width="19" height="8" rx="1" fill="#f27f84" />
    <rect x="45" y="38" width="18" height="60" rx="1" fill="#f2852a" />
    <rect x="45" y="38" width="18" height="8" rx="1" fill="#fcbc62" />
    <rect x="66" y="10" width="19" height="88" rx="1" fill="#25b844" />
    <rect x="66" y="10" width="19" height="8" rx="1" fill="#75dc8a" />
    <rect x="88" y="26" width="18" height="72" rx="1" fill="#2a8ef0" />
    <rect x="88" y="26" width="18" height="8" rx="1" fill="#74c8f4" />
  </>
)

const Keynote = () => (
  <>
    <rect x="57" y="50" width="6" height="48" fill="#a2b2bd" />
    <ellipse cx="60" cy="100" rx="23" ry="12" fill="#a9bcc8" />
    <path d="M17 6h86l5 44H12z" fill="#2c96e8" />
    <rect x="12" y="44" width="96" height="4" fill="#0f5ea8" />
    <rect x="30" y="12" width="60" height="30" fill="#f5f5f5" />
    <text x="34" y="19" fontFamily={sans} fontSize="6" fill="#333">KEYNOTE</text>
    <circle cx="48" cy="30" r="10" fill="#5fc4ef" />
    <path d="M48 30V20a10 10 0 0 1 9 14z" fill="#c07cdc" />
    <path d="M48 30l9 4a10 10 0 0 1-16 3z" fill="#8bdc6a" />
  </>
)

const Itunes = () => (
  <>
    <defs>
      <linearGradient id="it" x1="0" y1="0" x2="1" y2="1"><stop offset="0" stopColor="#fc5c6c" /><stop offset="0.55" stopColor="#b65fd4" /><stop offset="1" stopColor="#2dc8f0" /></linearGradient>
      <linearGradient id="nt" x1="0" y1="0" x2="0" y2="1"><stop offset="0" stopColor="#fa5a6e" /><stop offset="0.6" stopColor="#b266dc" /><stop offset="1" stopColor="#5aa2ef" /></linearGradient>
    </defs>
    <circle cx="60" cy="58" r="55" fill="url(#it)" />
    <circle cx="60" cy="58" r="49" fill="#eeeff3" />
    <path d="M45 35l38-11v50c0 7-7 11-13 11s-6-10 0-13c3-1 7-2 7-4V39l-26 7v38c0 7-7 11-13 11s-6-10 0-13c3-1 7-2 7-4z" fill="url(#nt)" />
  </>
)

const AppStore = () => (
  <>
    <defs>
      <linearGradient id="as" x1="0" y1="0" x2="0" y2="1"><stop offset="0" stopColor="#26c6fb" /><stop offset="1" stopColor="#1c6cf0" /></linearGradient>
    </defs>
    <circle cx="60" cy="58" r="53" fill="#e9e9e9" />
    <circle cx="60" cy="58" r="48" fill="url(#as)" />
    <rect x="23" y="54" width="73" height="8" fill="#e9eef4" />
    <path d="M59 25L32 84" stroke="#fff" strokeWidth="8" />
    <path d="M57 25l31 60" stroke="#fff" strokeWidth="8" />
  </>
)

const SysPrefs = () => (
  <>
    <defs>
      <linearGradient id="sp" x1="0" y1="0" x2="0" y2="1"><stop offset="0" stopColor="#c8dce4" /><stop offset="1" stopColor="#7b8184" /></linearGradient>
    </defs>
    <rect x="8" y="10" width="105" height="98" rx="3" fill="url(#sp)" />
    <circle cx="60" cy="58" r="44" fill="#2f2f31" />
    <circle cx="60" cy="58" r="37" fill="none" stroke="#8b8881" strokeWidth="8" strokeDasharray="5 4" />
    <circle cx="60" cy="58" r="30" fill="#4a4a4b" stroke="#9f9c96" strokeWidth="5" />
    <path d="M60 58V30M60 58L36 74M60 58l24 16" stroke="#a5a29c" strokeWidth="7" />
    <circle cx="60" cy="58" r="4" fill="#dfdfdf" />
  </>
)

const Atom = () => (
  <>
    <defs>
      <linearGradient id="at" x1="0" y1="0" x2="0" y2="1"><stop offset="0" stopColor="#b9dd9e" /><stop offset="1" stopColor="#1fa674" /></linearGradient>
    </defs>
    <circle cx="60" cy="58" r="53" fill="#e8ece8" />
    <circle cx="60" cy="58" r="49" fill="url(#at)" />
    <g fill="none" stroke="#eef6ee" strokeWidth="3">
      <ellipse cx="60" cy="58" rx="15" ry="37" transform="rotate(-25 60 58)" />
      <ellipse cx="60" cy="58" rx="15" ry="37" transform="rotate(25 60 58)" />
      <ellipse cx="60" cy="58" rx="36" ry="14" />
    </g>
    <circle cx="60" cy="57" r="4.500" fill="#eef6ee" />
  </>
)

const GhDesktop = () => (
  <>
    <defs>
      <linearGradient id="gd" x1="0" y1="0" x2="0" y2="1"><stop offset="0" stopColor="#a64fab" /><stop offset="1" stopColor="#542f7e" /></linearGradient>
      <clipPath id="gc"><circle cx="60" cy="58" r="52" /></clipPath>
    </defs>
    <circle cx="60" cy="58" r="57" fill="#ecebee" />
    <circle cx="60" cy="58" r="52" fill="url(#gd)" />
    <g clipPath="url(#gc)" fill="#ececf0">
      <path d="M30 22l13 9c11-3 23-3 34 0l13-9c2 8 3 16 1 24 7 16 0 36-17 40v28H46V86c-17-4-24-24-15-40-2-8-2-16-1-24z" />
      <path d="M20 80c4 12 10 16 26 14v6c-14 2-28-4-32-18z" />
    </g>
  </>
)

const Acrobat = () => (
  <>
    <rect x="5" y="3" width="110" height="106" fill="#2d0402" stroke="#ee3818" strokeWidth="5" />
    <path d="M27 88c-4-6 14-18 28-50 4-10 3-18 0-17-3 2-3 11 0 21 5 15 18 28 31 30 10 1 11-7 1-9-14-3-42 8-52 21-4 6-7 8-8 4z" fill="none" stroke="#fff" strokeWidth="3" />
  </>
)

const Trash = () => (
  <>
    <defs>
      <linearGradient id="tr" x1="0" y1="0" x2="0" y2="1"><stop offset="0" stopColor="#eeeeee" /><stop offset="1" stopColor="#cdcdcd" /></linearGradient>
    </defs>
    <path d="M22 20l20-8 8 16 14-24 12 20 14-10 12 6-8 22H30z" fill="#e2e2e4" />
    <path d="M38 18l8 14H32zM60 14l8 16H52zM80 16l8 14H74z" fill="#3d3d40" />
    <path d="M62 26l6-8 6 10z" fill="#35b25f" />
    <path d="M46 24l5-6 5 10z" fill="#5b7fd8" />
    <path d="M17 22c5 10 80 10 86 0l-13 82c-2 8-56 8-60 0z" fill="url(#tr)" />
    <path d="M17 22c5 10 80 10 86 0" fill="none" stroke="#dadada" strokeWidth="3" />
  </>
)

const dockApps = [
  [Finder, true], [Launchpad], [Chrome], [Safari, true], [Contacts], [Calendar], [Notes], [Reminders], [Maps], [Photos, true],
  [Pages], [NumbersApp], [Keynote], [Itunes], [AppStore], [SysPrefs], [Atom, true], [GhDesktop, true], [Acrobat, true],
]

const DockItem = ({ app: Drawing, on }) => (
  <DockCell>
    <DockSvg width="120" height="120" viewBox="0 0 120 120"><Drawing /></DockSvg>
    <DockDot $on={on} />
  </DockCell>
)

/* ---------- data ---------- */
const browserTabs = ['Facebook', 'The FAST Accura...', 'Mail - elizabeth.d...', 'https://moodle.u...', 'Bus Ethics & Soc...', 'Intro to Web Desi...', 'Web Browsers', 'Home - MySpace']

const files = [
  ['dir', 'Assignment 2', 'Created test.html and downloaded index.html', '5 hours ago'],
  ['dir', 'Project 1', 'Completed Project 1', '12 seconds ago'],
  ['dir', 'Test', 'Created test.html and downloaded index.html', '5 hours ago'],
  ['file', '.DS_Store', 'Completed Project 1', '12 seconds ago'],
  ['file', 'ReadMe.md', 'Added a test directory and file', '5 days ago'],
  ['file', 'index.html', 'Created test.html and downloaded index.html', '5 hours ago'],
]

const App = () => (
  <Desktop>
    <Global />
    <MenuBar>
      <AppleIcon />
      <MenuItems>
        <MenuItem $bold>Safari</MenuItem>
        {['File', 'Edit', 'View', 'History', 'Bookmarks', 'Window', 'Help'].map(m => <MenuItem key={m}>{m}</MenuItem>)}
      </MenuItems>
      <MenuRight>
        <CloudAlert />
        <BluetoothIcon />
        <WifiIcon />
        <BatteryIcon />
        <Clock>Thu 10:37 PM</Clock>
        <MagnifierIcon />
        <ListIcon />
      </MenuRight>
    </MenuBar>

    <Window>
      <Toolbar>
        <Light $c="#fc5b57" />
        <Light $c="#fdbb2e" />
        <Light $c="#33c748" />
        <ChromeButton $w={50} $ml={10}><Chevron d="M13 2L3 13l10 11" color="#777" /></ChromeButton>
        <ChromeButton $w={49} $ml={3}><Chevron d="M3 2l10 11L3 24" color="#c4c4c4" /></ChromeButton>
        <ChromeButton $w={74} $ml={20}><SidebarIcon /></ChromeButton>
        <AddressBar $w={1176}>
          <ReaderIcon />
          <Address><LockIcon />GitHub, Inc.</Address>
          <AddressRight><Speaker color="#1b7df2" /><ReloadIcon /></AddressRight>
        </AddressBar>
        <ToolRight>
          <ChromeButton $w={74}><DownloadIcon /></ChromeButton>
          <ChromeButton $w={74}><ShareIcon /></ChromeButton>
          <ChromeButton $w={74}><TabsIcon /></ChromeButton>
        </ToolRight>
      </Toolbar>

      <TabStrip>
        {browserTabs.map(t => <BrowserTab key={t}>{t}</BrowserTab>)}
        <BrowserTab $sound>Demi Lovato -...<Speaker color="#555" /></BrowserTab>
        <BrowserTab $active>lizzdellinger/web...</BrowserTab>
        <NewTab>+</NewTab>
      </TabStrip>

      <GhHeader>
        <Oct name="mark" h={64} color="#fff" />
        <Search>
          <Scope>This repository</Scope>
          <Placeholder>Search</Placeholder>
        </Search>
        <GhNav>
          <span>Pull requests</span>
          <span>Issues</span>
          <span>Marketplace</span>
          <span>Explore</span>
        </GhNav>
        <GhRight>
          <Svg width="28" height="28" viewBox="0 0 28 28"><path d="M12 0h4v12h12v4H16v12h-4V16H0v-4h12z" fill="#d5d6d8" /></Svg>
          <Caret $ml={11} $c="#c0c2c4" />
          <Spacer />
          <Identicon />
          <Caret $ml={9} $c="#c0c2c4" />
        </GhRight>
      </GhHeader>

      <Page>
        <RepoHead>
          <Container>
            <TitleRow>
              <RepoTitle>
                <Oct name="repo" h={32} color="#8c949c" />
                <Owner>lizzdellinger</Owner>
                <Slash>/</Slash>
                <Link $bold>web-dev-hw-</Link>
              </RepoTitle>
              <Actions>
                <Social>
                  <Btn $w={178} $fs={24} $radius="6px 0 0 6px"><Oct name="eye" h={32} />Watch<Caret $ml={2} /></Btn>
                  <Count $w={57}>0</Count>
                </Social>
                <Social>
                  <Btn $w={126} $fs={24} $radius="6px 0 0 6px"><Oct name="star" h={32} />Star</Btn>
                  <Count $w={57}>0</Count>
                </Social>
                <Social>
                  <Btn $w={122} $fs={24} $radius="6px 0 0 6px"><Oct name="fork" h={32} />Fork</Btn>
                  <Count $w={57}>0</Count>
                </Social>
              </Actions>
            </TitleRow>
            <Tabs>
              <RepoTab $sel><Oct name="code" h={32} color="#24292e" /><TabLabel>Code</TabLabel></RepoTab>
              <RepoTab><Oct name="issue" color="#a5abb1" /><TabLabel>Issues</TabLabel><Counter>0</Counter></RepoTab>
              <RepoTab><Oct name="pull" color="#a5abb1" /><TabLabel>Pull requests</TabLabel><Counter>0</Counter></RepoTab>
              <RepoTab><Oct name="project" color="#a5abb1" /><TabLabel>Projects</TabLabel><Counter>0</Counter></RepoTab>
              <RepoTab><Oct name="book" color="#a5abb1" /><TabLabel>Wiki</TabLabel></RepoTab>
              <RepoTab><Oct name="graph" color="#a5abb1" /><TabLabel>Insights</TabLabel></RepoTab>
              <RepoTab><Oct name="gear" color="#a5abb1" /><TabLabel>Settings</TabLabel></RepoTab>
            </Tabs>
          </Container>
        </RepoHead>

        <Container>
          <DescRow>
            <Desc>
              <span>Repository for my Introduction to Web Design and Development Homework</span>
              <Link>https://lizzdellinger.github.io/web-d...</Link>
            </Desc>
            <Btn $w={89}>Edit</Btn>
          </DescRow>
          <Topics><Link>Add topics</Link></Topics>

          <Summary>
            <Numbers>
              <NumCell><Oct name="history" color="#6a737d" /><span><b>6</b> commits</span></NumCell>
              <NumCell><Oct name="branch" h={32} color="#6a737d" /><span><b>1</b> branch</span></NumCell>
              <NumCell><Oct name="tag" color="#6a737d" /><span><b>0</b> releases</span></NumCell>
              <NumCell><Oct name="people" color="#6a737d" /><span><b>1</b> contributor</span></NumCell>
            </Numbers>
            <LangBar />
          </Summary>

          <FileNav>
            <BtnGroup>
              <BranchBtn $w={244}><BranchLabel>Branch:</BranchLabel> master<Caret $ml={1} /></BranchBtn>
              <Btn $w={243} $ml={12}>New pull request</Btn>
            </BtnGroup>
            <BtnGroup>
              <Btn $w={219} $radius="6px 0 0 6px">Create new file</Btn>
              <Btn $w={184} $ml={-2} $radius="0">Upload files</Btn>
              <Btn $w={138} $ml={-2} $radius="0 6px 6px 0">Find file</Btn>
              <CloneBtn>Clone or download<Caret $ml={2} /></CloneBtn>
            </BtnGroup>
          </FileNav>

          <FileTable>
            <Tease>
              <Identicon />
              <TeaseAuthor>lizzdellinger</TeaseAuthor>
              <TeaseMsg>Completed Project 1</TeaseMsg>
              <TeaseRight>Latest commit d512a54 12 seconds ago</TeaseRight>
            </Tease>
            {files.map((f, i) => (
              <FileRow key={f[1]} $first={i === 0}>
                <FileIcon><Oct name={f[0]} color="#8096b0" /></FileIcon>
                <FileName>{f[1]}</FileName>
                <FileMsg>{f[2]}</FileMsg>
                <FileAge>{f[3]}</FileAge>
              </FileRow>
            ))}
          </FileTable>

          <Readme>
            <ReadmeHead><Oct name="book" h={32} color="#24292e" />ReadMe.md</ReadmeHead>
            <ReadmeBody><H1>My Intro-Web-Dev Homework Repo</H1></ReadmeBody>
          </Readme>
        </Container>
      </Page>
      <BottomShade />
    </Window>

    <Dock>
      {dockApps.map(([app, on], i) => <DockItem key={i} app={app} on={on} />)}
      <DockDivider />
      <DockItem app={Trash} />
    </Dock>
  </Desktop>
)

export default App
